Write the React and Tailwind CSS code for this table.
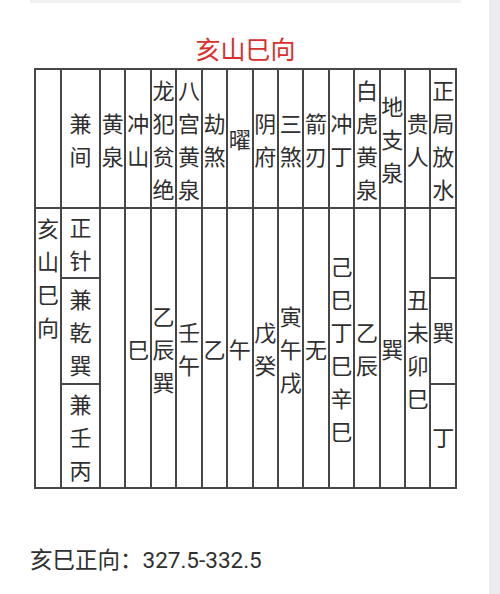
import React from "react";

const heads = [
  "黄泉",
  "冲山",
  "龙犯贫绝",
  "八宫黄泉",
  "劫煞",
  "曜",
  "阴府",
  "三煞",
  "箭刃",
  "冲丁",
  "白虎黄泉",
  "地支泉",
  "贵人",
];

const spans = ["", "巳", "乙辰巽", "壬午", "乙", "午", "戊癸", "寅午戌", "无", "己巳丁巳辛巳", "乙辰", "巽", "丑未卯巳"];

const cell = "border-2 border-[#474747] p-0 text-center align-middle break-all";

const App = () => {
  return (
    <div className="flex w-[500px] h-[594px] bg-white text-[#2f2f2f] font-['Noto_Sans_CJK_SC',sans-serif]">
      <div className="w-[489px] flex flex-col">
        {/* strip left over from the block above */}
        <div className="ml-[30px] w-[431px] h-[3px] bg-[#f1f1f3]" />

        <h2 className="ml-[34px] w-[423px] mt-[27px] text-center text-[25px] leading-[36px] text-[#d8302c]">
          亥山巳向
        </h2>

        <table className="ml-[34px] mt-[2px] w-[423px] table-fixed border-collapse text-[22px] leading-[33px]">
          <colgroup>
            <col className="w-[26px]" />
            <col className="w-[39px]" />
            {Array.from({ length: 14 }).map((_, i) => (
              <col key={i} />
            ))}
          </colgroup>
          <tbody>
            <tr className="h-[139px]">
              <td className={cell}></td>
              <td className={cell}>兼间</td>
              {heads.map((h) => (
                <td key={h} className={cell}>
                  {h}
                </td>
              ))}
              <td className={cell}>正局放水</td>
            </tr>
            <tr className="h-[70px]">
              <td rowSpan={3} className={`${cell} !align-top pt-[2px]`}>
                亥山巳向
              </td>
              <td className={cell}>正针</td>
              {spans.map((s, i) => (
                <td key={i} rowSpan={3} className={cell}>
                  {s}
                </td>
              ))}
              <td className={cell}></td>
            </tr>
            <tr className="h-[106px]">
              <td className={cell}>兼乾巽</td>
              <td className={cell}>巽</td>
            </tr>
            <tr className="h-[104px]">
              <td className={cell}>兼壬丙</td>
              <td className={cell}>丁</td>
            </tr>
          </tbody>
        </table>

        <p className="ml-[30px] mt-[55px] text-[22.5px] leading-[33px] font-['Roboto','Noto_Sans_CJK_SC',sans-serif]">
          亥巳正向：327.5-332.5
        </p>
      </div>
      <div className="w-[11px] bg-[#ebebf0]" />
    </div>
  );
};

export default App;
